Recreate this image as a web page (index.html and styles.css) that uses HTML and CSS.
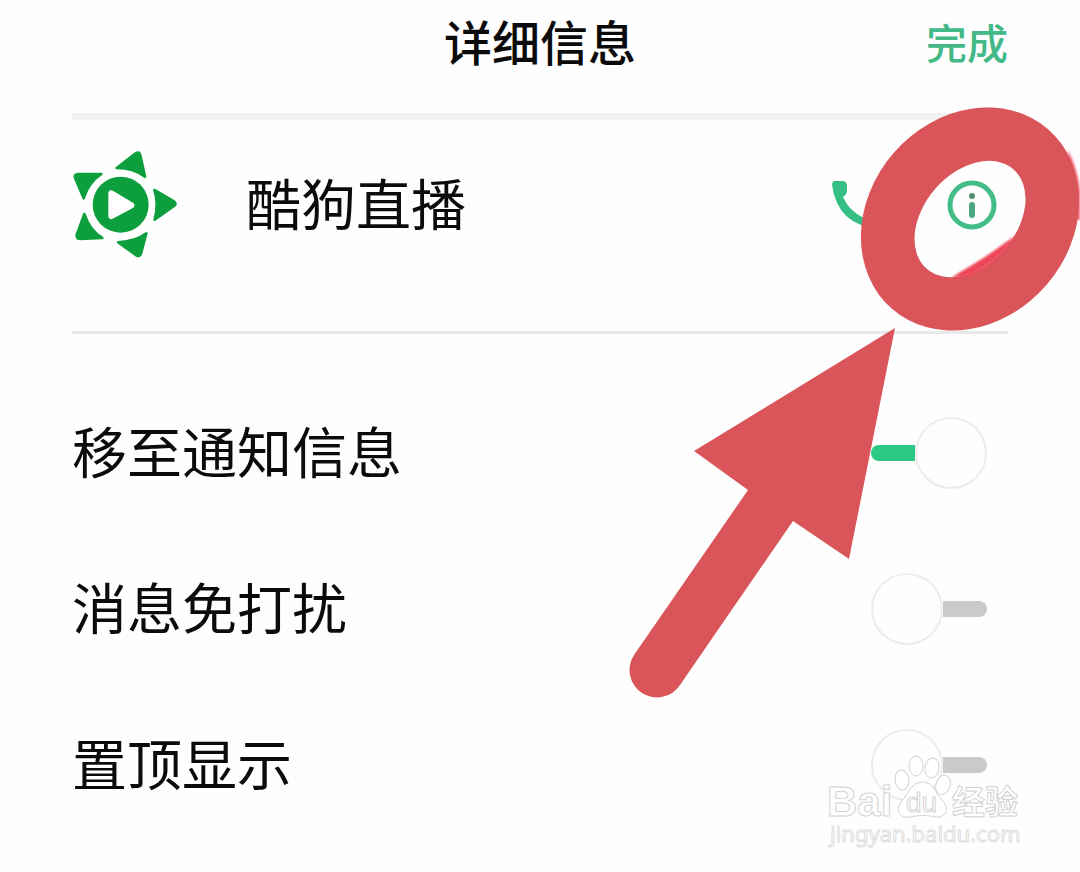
FILE: index.html
```html
<!DOCTYPE html>
<html lang="zh-CN">
<head>
<meta charset="utf-8">
<meta name="viewport" content="width=device-width, initial-scale=1">
<title>详细信息</title>
<link rel="stylesheet" href="styles.css">
</head>
<body>
<main class="page">
  <header class="header">
    <h1 class="title">详细信息</h1>
    <button class="done" type="button">完成</button>
  </header>

  <section class="contact">
    <svg class="logo" viewBox="39 33 318 324" aria-hidden="true">
      <g fill="#0d9f3d" stroke="#0d9f3d" stroke-width="8" stroke-linejoin="round">
        <path d="M173 84 230 40Q241 34 244 46L258 110Q222 84 173 84Z"/>
        <path d="M286 150 345 184Q354 191 345 198L287 239Q300 190 286 150Z"/>
        <path d="M262 280 246 341Q242 352 232 346L178 307Q230 304 262 280Z"/>
        <path d="M76 222Q92 272 130 294L64 297Q52 297 53 285Z"/>
        <path d="M74 175Q88 128 127 102L57 102Q45 103 48 113Z"/>
      </g>
      <circle cx="185" cy="194" r="84" fill="#0d9f3d"/>
      <path d="M157 160 217 196 157 228Z" fill="#fff" stroke="#fff" stroke-width="18" stroke-linejoin="round"/>
    </svg>
    <span class="name">酷狗直播</span>
    <div class="actions">
      <button class="icon-button" type="button" aria-label="拨打电话">
        <svg viewBox="0 0 52 52" aria-hidden="true">
          <path d="M2 2H11Q14 2 15 6V12Q15 15 11 18Q17 32 32 39L37 34Q39 33 42 34L48 36Q50 37 50 40V47Q49 49 46 49Q6 47 0 6Q0 3 2 2Z" fill="#35bf85"/>
        </svg>
      </button>
      <button class="icon-button" type="button" aria-label="详情">
        <svg viewBox="0 0 52 52" aria-hidden="true">
          <circle cx="26" cy="26" r="22" fill="none" stroke="#42bd87" stroke-width="5"/>
          <circle cx="26" cy="17" r="3" fill="#4b8f72"/>
          <path d="M26 26V36" stroke="#4ba67d" stroke-width="6" stroke-linecap="round"/>
        </svg>
      </button>
    </div>
  </section>

  <section class="settings">
    <label class="row"><span class="label">移至通知信息</span><input class="switch" type="checkbox" checked></label>
    <label class="row"><span class="label">消息免打扰</span><input class="switch" type="checkbox"></label>
    <label class="row"><span class="label">置顶显示</span><input class="switch" type="checkbox"></label>
  </section>

  <svg class="annotation" viewBox="620 90 460 620" aria-hidden="true">
    <defs>
      <filter id="soft" x="-20%" y="-20%" width="140%" height="140%"><feGaussianBlur stdDeviation="1"/></filter>
    </defs>
    <path d="M1068 150Q1078 170 1080 190V220L1070 220Z" fill="#f4667a" filter="url(#soft)"/>
    <path transform="translate(970 219) rotate(-49)" fill="#da5559" fill-rule="evenodd" d="M-119 0A119 101 0 1 1 119 0A119 101 0 1 1-119 0ZM-66 0A66 46 0 1 1 66 0A66 46 0 1 1-66 0Z"/>
    <path d="M953 277Q985 259 1014 237Q1003 257 978 271Q965 278 953 277Z" fill="#ee4558" stroke="#ee4558" filter="url(#soft)"/>
    <path d="M895 328 694 451 748 490 634 655A27 27 0 0 0 680 685L793 521 849 559Z" fill="#da5559"/>
  </svg>

  <svg class="watermark" viewBox="824 750 204 102" role="img" aria-label="Baidu 经验">
    <g fill="#fff" stroke="#d2d2d2">
      <ellipse cx="902" cy="780" rx="7" ry="10" transform="rotate(-8 902 780)"/>
      <ellipse cx="916" cy="766" rx="7" ry="10"/>
      <ellipse cx="932" cy="768" rx="7" ry="10" transform="rotate(10 932 768)"/>
      <ellipse cx="943" cy="785" rx="7" ry="10" transform="rotate(20 943 785)"/>
      <path d="M922 782C934 782 935 793 942 800C952 811 944 818 935 817C927 815 918 815 910 817C900 819 895 810 901 802C908 795 910 783 922 782Z"/>
      <text class="mark-bai" x="827" y="816">Bai</text>
      <text class="mark-du" x="906" y="812">du</text>
      <text class="mark-cjk" x="952" y="814">经验</text>
      <text class="mark-url" x="830" y="842">jingyan.baidu.com</text>
    </g>
  </svg>
</main>
</body>
</html>
```
FILE: styles.css
```css
*,
*::before,
*::after {
  box-sizing: border-box;
}

body {
  margin: 0;
  background: #fefefe;
  color: #0b0b0b;
  font-family: "Noto Sans CJK SC", sans-serif;
}

.page {
  position: relative;
  min-height: 100vh;
  padding: 0 72px;
  overflow: hidden;
}

button {
  padding: 0;
  border: 0;
  background: none;
  font: inherit;
  cursor: pointer;
}

.header {
  display: grid;
  grid-template-columns: 1fr auto 1fr;
  align-items: center;
  padding: 4px 0 36px;
  border-bottom: 7px solid #f0f0f0;
}

.title {
  grid-column: 2;
  margin: 0;
  font-size: 48px;
  font-weight: 500;
  line-height: 73px;
}

.done {
  justify-self: end;
  color: #42b987;
  font-size: 41px;
  font-weight: 500;
  line-height: 72px;
}

.contact {
  display: flex;
  align-items: center;
  padding: 31px 10px 72px 0;
  border-bottom: 3px solid #e8e8e8;
}

.logo {
  width: 106px;
  height: 108px;
}

.name,
.label {
  padding-bottom: 8px;
  font-size: 55px;
  line-height: 72px;
}

.name {
  margin-left: 68px;
}

.actions {
  display: flex;
  gap: 62px;
  margin-left: auto;
}

.icon-button,
.icon-button svg {
  display: block;
  width: 52px;
  height: 52px;
}

.settings {
  padding: 41px 21px 0 0;
}

.row {
  display: flex;
  align-items: center;
  justify-content: space-between;
  height: 156px;
}

.switch {
  display: flex;
  align-items: center;
  appearance: none;
  width: 116px;
  height: 72px;
  margin: 0;
  cursor: pointer;
}

.switch::before {
  content: "";
  flex: none;
  width: 72px;
  height: 72px;
  border: 2px solid #efebec;
  border-radius: 50%;
  background: #fefefe;
}

.switch::after {
  content: "";
  order: 1;
  width: 44px;
  height: 16px;
  border-radius: 0 8px 8px 0;
  background: #cacaca;
}

.switch:checked::after {
  order: -1;
  border-radius: 8px 0 0 8px;
  background: #2bc983;
}

.annotation {
  position: absolute;
  top: 90px;
  right: 0;
  width: 460px;
  height: 620px;
  pointer-events: none;
}

.watermark {
  position: absolute;
  top: 750px;
  right: 52px;
  width: 204px;
  height: 102px;
  pointer-events: none;
}

.mark-bai {
  font: bold 42px "Liberation Sans", sans-serif;
}

.mark-du {
  font: 28px "Liberation Sans", sans-serif;
}

.mark-cjk {
  font: bold 33px "Noto Sans CJK SC", sans-serif;
}

.mark-url {
  font: 22px "Noto Sans", sans-serif;
  stroke: #dcdcdc;
}
```
